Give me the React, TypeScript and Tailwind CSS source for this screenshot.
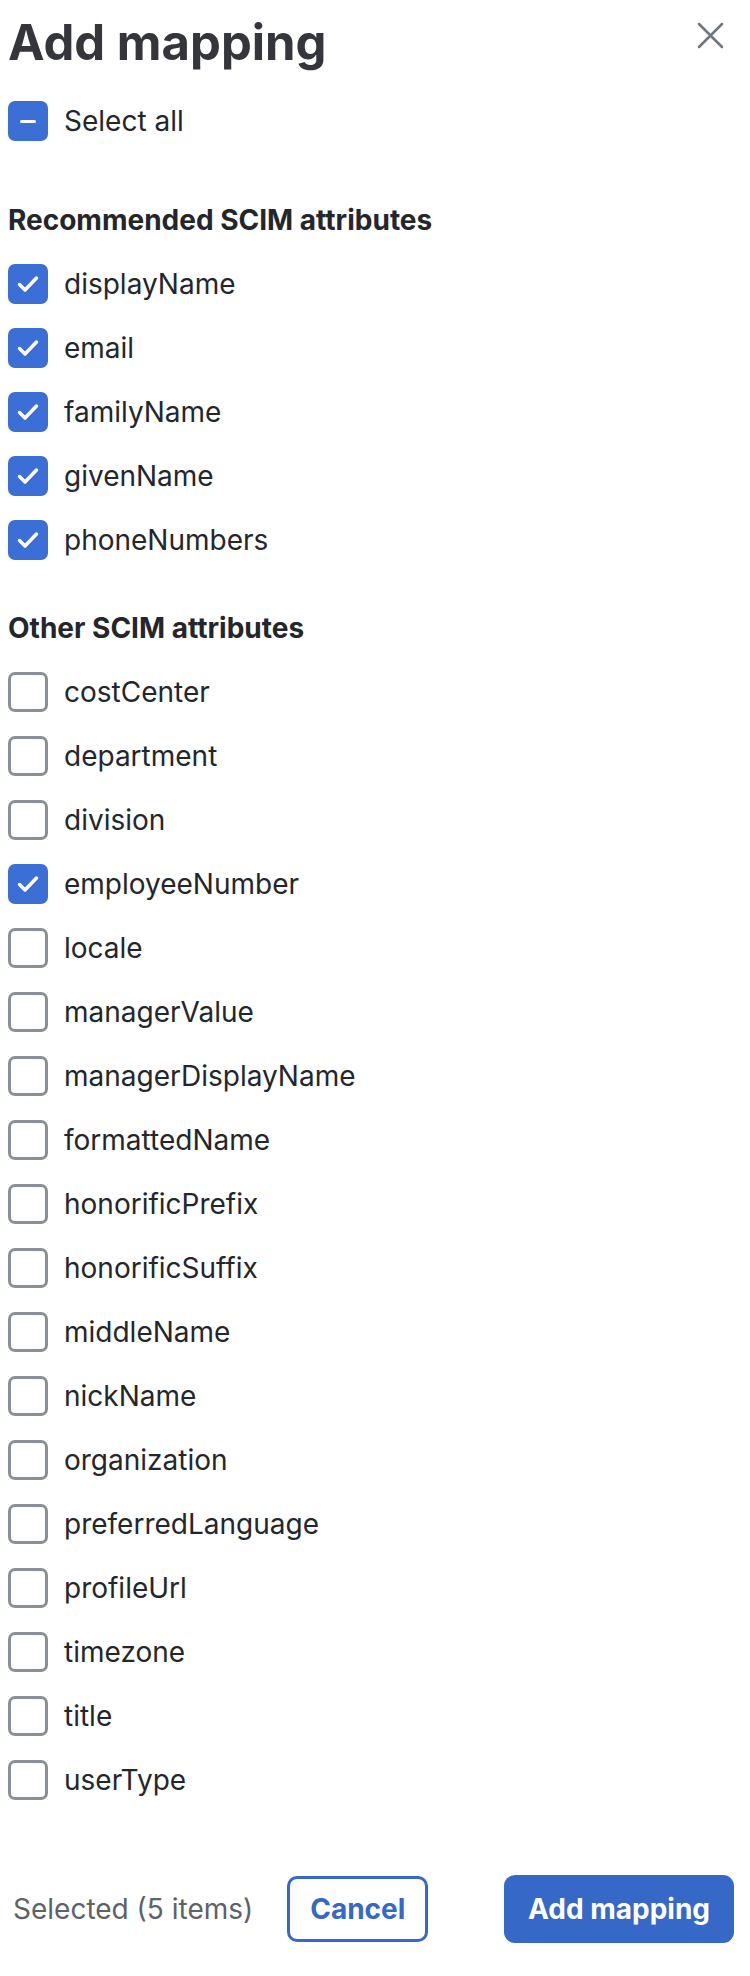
import { useState } from "react";

const RECOMMENDED = ["displayName", "email", "familyName", "givenName", "phoneNumbers"];
const OTHER = [
  "costCenter",
  "department",
  "division",
  "employeeNumber",
  "locale",
  "managerValue",
  "managerDisplayName",
  "formattedName",
  "honorificPrefix",
  "honorificSuffix",
  "middleName",
  "nickName",
  "organization",
  "preferredLanguage",
  "profileUrl",
  "timezone",
  "title",
  "userType",
];

function Box({ state }: { state: "on" | "off" | "mixed" }) {
  if (state === "off") {
    return <span className="block w-10 h-10 rounded-[7px] border-[3px] border-[#8a9099] bg-white shrink-0" />;
  }
  return (
    <span className="flex items-center justify-center w-10 h-10 rounded-[7px] bg-[#3b6fd5] shrink-0">
      {state === "on" ? (
        <svg width="40" height="40" viewBox="0 0 40 40" fill="none">
          <path d="M11.5 20.5l5.5 5.5 11.5-12" stroke="#fff" strokeWidth="3.5" strokeLinecap="round" strokeLinejoin="round" />
        </svg>
      ) : (
        <span className="block w-4 h-[3px] rounded-sm bg-white" />
      )}
    </span>
  );
}

function Row({ label, checked, onToggle }: { label: string; checked: boolean; onToggle: () => void }) {
  return (
    <button type="button" onClick={onToggle} className="flex items-center h-16 w-full text-left">
      <Box state={checked ? "on" : "off"} />
      <span className="ml-4 text-[28px] text-[#23262b]">{label}</span>
    </button>
  );
}

export default function App() {
  const [selected, setSelected] = useState<string[]>([...RECOMMENDED, "employeeNumber"]);

  const toggle = (name: string) =>
    setSelected((s) => (s.includes(name) ? s.filter((n) => n !== name) : [...s, name]));

  return (
    <div className="w-[750px] h-[1976px] bg-white flex flex-col" style={{ fontFamily: "Inter, 'Noto Sans', sans-serif" }}>
      <div className="flex items-start justify-between pl-2 pr-[26px] pt-[14px]">
        <h1 className="text-[49px] leading-[58px] font-bold text-[#34363b]">Add mapping</h1>
        <button type="button" className="mt-[8px]">
          <svg width="27" height="27" viewBox="0 0 27 27" fill="none">
            <path d="M2 2l23 23M25 2L2 25" stroke="#6f757d" strokeWidth="2.5" strokeLinecap="round" />
          </svg>
        </button>
      </div>

      <div className="px-2">
        <div className="flex items-center h-16 mt-[17px]">
          <Box state="mixed" />
          <span className="ml-4 text-[28px] text-[#23262b]">Select all</span>
        </div>

        <h2 className="mt-[35px] h-16 flex items-center text-[28px] font-bold text-[#23262b]">
          Recommended SCIM attributes
        </h2>
        {RECOMMENDED.map((name) => (
          <Row key={name} label={name} checked={selected.includes(name)} onToggle={() => toggle(name)} />
        ))}

        <h2 className="mt-[24px] h-16 flex items-center text-[28px] font-bold text-[#23262b]">
          Other SCIM attributes
        </h2>
        {OTHER.map((name) => (
          <Row key={name} label={name} checked={selected.includes(name)} onToggle={() => toggle(name)} />
        ))}
      </div>

      <div className="flex items-center mt-auto mb-[33px] pl-[13px] pr-4">
        <span className="text-[28px] text-[#5d6168]">Selected (5 items)</span>
        <button
          type="button"
          className="ml-[34px] w-[141px] h-[66px] rounded-[10px] border-[3px] border-[#3668c7] text-[28px] font-bold text-[#3668c7]"
        >
          Cancel
        </button>
        <button
          type="button"
          className="ml-auto w-[230px] h-[68px] rounded-[11px] bg-[#3668c7] text-[28px] font-bold text-white"
        >
          Add mapping
        </button>
      </div>
    </div>
  );
}
